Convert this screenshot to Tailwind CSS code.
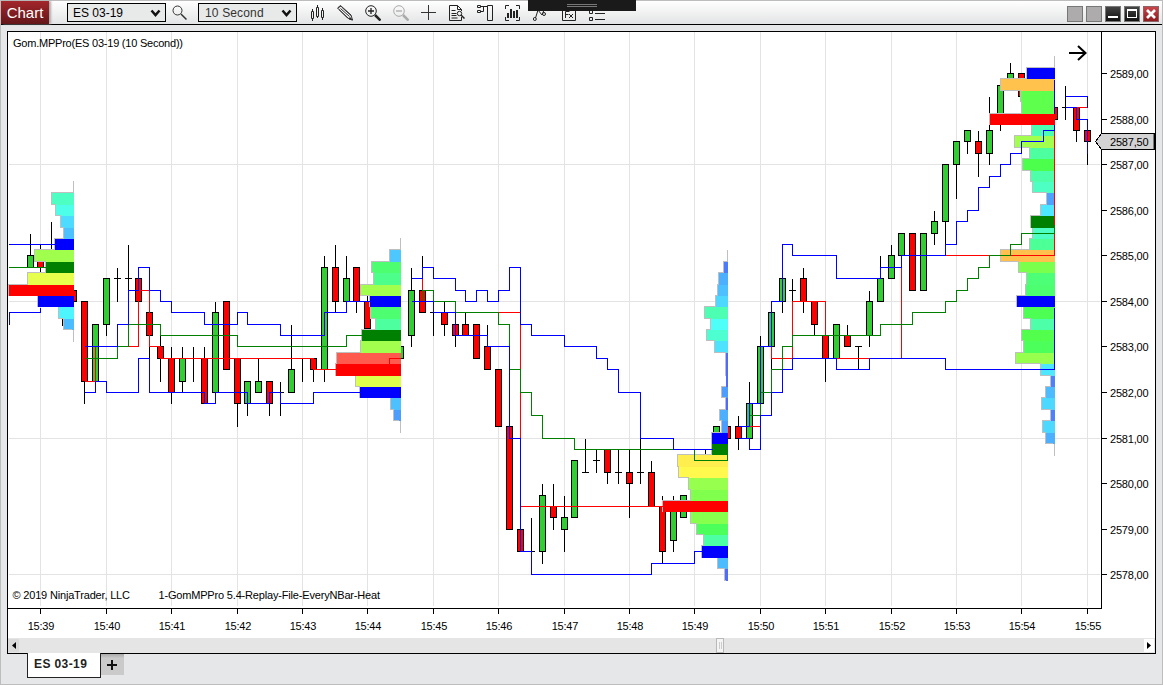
<!DOCTYPE html>
<html lang="en">
<head>
  <meta charset="UTF-8" />
  <meta name="viewport" content="width=device-width, initial-scale=1.0"/>
  <title>Chart - ES 03-19</title>
  <script src="https://cdn.jsdelivr.net/npm/@tailwindcss/browser@4"></script>
</head>
<body class="font-['Liberation_Sans',sans-serif] text-black overflow-hidden">
  <div class="relative w-[1163px] h-[685px] border border-[#bdbdbd] bg-[#e6e7e8] flex flex-col">

    <!-- Toolbar -->
    <header class="h-6 shrink-0 border-b border-black bg-linear-to-b from-white to-[#e3e4e5] flex items-center">
      <div class="w-12 h-full bg-linear-to-b from-[#a3262b] to-[#64161a] text-white text-[15px] leading-[23px] text-center shadow-[2px_0_2px_#aaa]">Chart</div>
      <div class="ml-[18px] w-[99px] h-[19px] border border-black bg-[#e8e9e9] flex items-center justify-between pl-[5px] pr-1 text-[12px]">
        <span>ES 03-19</span>
        <svg width="11" height="8" viewBox="0 0 11 8" fill="none" stroke="#111" stroke-width="2.500"><path d="M1.500 1.500 5.500 6l4-4.500"/></svg>
      </div>
      <svg class="ml-[6px]" width="16" height="16" viewBox="0 0 16 16" fill="none" stroke="#333"><circle cx="5.500" cy="5.500" r="4.500"/><path d="m9 9 5.500 5.500" stroke-width="1.500"/></svg>
      <div class="ml-[10px] w-[99px] h-[19px] border border-black bg-[#e8e9e9] flex items-center justify-between pl-[6px] pr-1 text-[12px] text-[#333]">
        <span class="tracking-[0.15px]">10 Second</span>
        <svg width="11" height="8" viewBox="0 0 11 8" fill="none" stroke="#111" stroke-width="2.500"><path d="M1.500 1.500 5.500 6l4-4.500"/></svg>
      </div>
      <div class="ml-3 mt-px flex gap-3">
        <svg width="16" height="16" viewBox="0 0 16 16" fill="none" stroke="#222"><path d="M3.500 4v2M3.500 13v3M2.500 6.500h2v7h-2zM8.500 0v3M8.500 11v2M7.500 2.500h2v9h-2zM13.500 3v3M13.500 12v3M12.500 5.500h2v7h-2z"/></svg>
        <svg width="16" height="16" viewBox="0 0 16 16" fill="none" stroke="#333"><path d="m.500 3 3-2.500L14 10l1.500 5-5-2zM2 4.500 11 13M4.500 2 14 10.500M3.500 3.500l9 8M1 3l3-2" /><path d="m13 12.500 2.500 2.500-3.500-1z" fill="#222"/></svg>
        <svg width="16" height="16" viewBox="0 0 16 16" fill="none" stroke="#222"><circle cx="6" cy="6" r="5.300"/><path d="M3 6h6M6 3v6" stroke-width="1.300"/><path d="m10 10 5.500 5.500" stroke-width="2.500"/></svg>
        <svg width="16" height="16" viewBox="0 0 16 16" fill="none" stroke="#aaa"><circle cx="6" cy="6" r="5.300"/><path d="M3 6h6" stroke-width="1.300"/><path d="m10 10 5.500 5.500" stroke-width="2.500"/></svg>
        <svg width="16" height="16" viewBox="0 0 16 16" stroke="#333"><path d="M0 7.500h15M7.500 0v15"/></svg>
        <svg width="16" height="16" viewBox="0 0 16 16" fill="none" stroke="#222"><path d="M12.500 12v3.500h-12V.500h8l4 4V6M8.500.500v4h4M2.500 5.500h4M2.500 8.500h5M2.500 10.500h5M2.500 13h6"/><circle cx="10.500" cy="8.500" r="2.200"/><path d="m12 10 3.500 3.500" stroke-width="1.500"/></svg>
        <svg width="16" height="16" viewBox="0 0 16 16" fill="none" stroke="#222"><path d="M.500.500h3v2h-3zM.500 5.500h3v2h-3zM10.500.500h5v15h-5zM3.500 1.500h7M3.500 6.500h3v-5"/></svg>
        <svg width="16" height="16" viewBox="0 0 16 16" fill="none" stroke="#222"><path d="M.500 4V.500H4M11 .500h3.500V4M.500 12v3.500H4M11 15.500h3.500V12"/><path d="M3 8v5M6 4v9M9 6v7M12 5v8" stroke-width="2"/></svg>
        <svg width="16" height="16" viewBox="0 0 16 16" fill="none" stroke="#222"><path d="m2.500 13 2.500-8 4 5 2-5"/><circle cx="1.800" cy="14" r="1.500"/><circle cx="11" cy="9" r="1.500"/></svg>
        <svg width="16" height="16" viewBox="0 0 16 16" fill="none" stroke="#222"><path d="M1.500 2.500h13v13h-13zM4.500 13V6.500h4M4.500 9.500h3M8 9l4 4M12 9l-4 4"/></svg>
        <svg width="16" height="16" viewBox="0 0 16 16" fill="none" stroke="#222"><path d="M.500 5.500h3v3h-3zM.500 12.500h3v3h-3zM6 8.500h10M6 14.500h10"/></svg>
      </div>

      <!-- Window buttons -->
      <div class="ml-auto mr-[3px] mt-[2px] flex gap-[3px]">
        <div class="w-4 h-4 border border-[#777] bg-[#aeabac]"></div>
        <div class="w-4 h-4 border border-[#777] bg-[#aeabac]"></div>
        <div class="w-4 h-4 border border-[#777] bg-linear-to-b from-[#444] to-[#111] flex items-end justify-center pb-[3px]"><div class="w-[10px] h-[2px] bg-white"></div></div>
        <div class="w-4 h-4 border border-[#777] bg-linear-to-b from-[#444] to-[#111] flex items-center justify-center"><div class="w-[10px] h-[9px] border border-t-2 border-white"></div></div>
        <div class="w-4 h-4 border border-[#8c6264] bg-linear-to-b from-[#c8454a] to-[#8c1c20] flex items-center justify-center">
          <svg width="10" height="10" viewBox="0 0 10 10" stroke="#fff" stroke-width="2.700"><path d="m1 1 8 8M9 1 1 9"/></svg>
        </div>
      </div>
    </header>

    <!-- Docked handle over the toolbar -->
    <div class="absolute -top-px left-[527px] w-[108px] h-[11px] bg-[#1a1a1a] flex flex-col items-center gap-px pt-1">
      <div class="w-[30px] h-px bg-[#777]"></div>
      <div class="w-[30px] h-px bg-[#777]"></div>
    </div>

    <!-- Chart panel -->
    <main class="mt-[6px] ml-[6px] w-[1149px] h-[623px] shrink-0 border border-black bg-white flex flex-col">
      <svg id="chart" width="1147" height="606" viewBox="8 32 1147 606" class="block shrink-0 text-[11px]" shape-rendering="crispEdges"></svg>
      <div class="h-[15px] bg-[#e5e5e5] flex items-center justify-between">
        <div class="w-[11px] h-[13px] bg-[#dadada] flex items-center justify-center"><svg width="4" height="7" viewBox="0 0 4 7"><path d="M4 0v7L0 3.500z"/></svg></div>
        <div class="ml-[697px] w-2 h-[15px] border border-[#b8b8b8] bg-[#f4f4f4] flex justify-center gap-px py-[3px]"><div class="w-px bg-[#ccc]"></div><div class="w-px bg-[#ccc]"></div></div>
        <div class="ml-auto mr-px w-[10px] h-[13px] bg-white flex items-center justify-center"><svg width="4" height="7" viewBox="0 0 4 7"><path d="M0 0v7l4-3.500z"/></svg></div>
      </div>
    </main>

    <!-- Tabs -->
    <div class="relative -mt-px ml-[26px] flex items-start">
      <div class="w-[74px] h-[25px] bg-white border border-t-0 border-[#222] text-[12px] tracking-[0.4px] font-bold text-[#222] leading-[23px] pl-[6px]">ES 03-19</div>
      <div class="mt-px w-[23px] h-[21px] bg-linear-to-b from-[#aaa] via-[#cacaca] via-20% to-[#cacaca] flex items-center justify-center pr-[2px]">
        <svg width="10" height="10" viewBox="0 0 10 10" stroke="#111" stroke-width="2"><path d="M0 5h10M5 0v10"/></svg>
      </div>
    </div>
  </div>

  <script>
    const GREEN = '#32cd32', RED = '#ff0000';
    // price step n (quarter points away from 2584) to pixel row
    const row = n => Math.round(300.9 - 11.39 * n);
    let out = '';

    const line = (d, color) => { out += `<path d="${d}" fill="none" stroke="${color}" transform="translate(.5 .5)"/>`; };
    const rect = (x, y, w, h, color) => { out += `<rect x="${x}" y="${y}" width="${w}" height="${h}" fill="${color}"/>`; };

    // Grid
    const times = [40,106,171,237,302,367,433,498,564,629,694,760,825,891,956,1021,1087];
    times.forEach(x => rect(x, 32, 1, 574, '#e3e3e3'));
    [164,301,438,574].forEach(y => rect(9, y, 1091, 1, '#e3e3e3'));

    // Candles: x, high, body top, body bottom, low, kind (1 up, -1 down, 0 doji, 2 wick only)
    const candles = [
      [30,234,255,267,267,1],[40,245,261,267,272,-1],[51,222,250,250,250,2],[62,319,325,325,325,2],[73,290,290,301,301,-1],
      [84,301,301,381,403,-1],[95,324,324,381,381,1],[106,278,278,324,335,1],[117,268,278,278,301,0],[128,245,278,278,290,0],
      [138,278,278,301,301,-1],[149,312,312,335,358,-1],[160,335,346,358,381,-1],[171,347,358,392,403,-1],[182,347,358,381,392,1],
      [193,347,358,358,381,2],[204,347,358,403,403,-1],[215,302,312,392,392,1],[226,301,301,369,369,-1],[237,358,358,403,426,-1],
      [247,381,381,403,415,1],[258,358,381,392,392,1],[269,381,381,403,415,-1],[280,382,392,392,415,0],[291,325,369,392,392,1],
      [302,359,359,359,381,2],[313,358,358,369,381,-1],[324,256,267,369,381,1],[335,245,267,301,312,-1],[346,256,278,301,301,1],
      [356,267,267,301,312,-1],[367,296,301,328,328,-1],[400,346,346,358,358,1],
      [411,268,290,335,346,1],[422,256,290,312,312,-1],[433,312,312,312,335,0],[444,302,312,324,335,-1],[455,324,324,335,346,-1],
      [465,313,324,335,335,-1],[476,324,324,358,358,-1],[487,325,346,369,369,-1],[498,369,369,426,426,-1],[509,426,426,529,529,-1],
      [520,529,529,551,551,-1],[531,518,551,551,551,0],[542,484,495,551,563,1],[553,484,506,517,529,-1],[564,496,517,529,551,1],
      [574,460,460,517,517,1],[585,439,472,472,472,0],[596,450,460,460,472,0],[607,449,449,472,483,-1],[618,450,472,472,483,0],
      [629,450,472,483,517,-1],[640,439,472,472,483,0],[651,461,472,506,506,-1],[662,496,506,551,562,-1],[673,496,506,540,551,1],
      [683,495,495,517,517,1],[705,449,455,455,455,2],[716,426,426,438,438,1],[727,426,426,438,438,-1],
      [738,416,426,438,449,-1],[749,382,403,438,438,1],[760,336,346,403,403,1],[771,312,312,346,369,1],[782,278,278,301,312,1],
      [792,279,290,290,301,0],[803,268,278,301,312,-1],[814,301,301,324,335,-1],[825,335,335,358,381,-1],[836,324,324,358,358,1],
      [847,325,335,346,346,-1],[858,346,346,346,369,0],[869,291,301,335,346,1],[880,256,278,301,301,1],[891,245,255,278,278,1],
      [901,233,233,255,255,1],[912,233,233,290,290,-1],[923,233,233,290,290,1],[934,211,221,233,244,1],[945,164,164,221,244,1],
      [956,141,141,164,198,1],[967,130,130,141,153,1],[978,131,141,153,176,-1],[989,97,130,153,164,1],[1000,85,85,119,130,1],
      [1010,63,73,85,85,1],[1021,73,73,96,96,-1],[1054,107,107,119,119,-1],[1065,86,107,107,119,0],[1076,107,107,130,141,-1],
      [1087,130,130,141,164,-1]
    ];
    candles.forEach(([x, hi, top, bot, lo, kind]) => {
      rect(x, hi, 1, lo - hi + 1, '#000');
      if (kind === 0) rect(x - 3, top, 7, 1, '#000');
      if (kind === 1 || kind === -1) {
        rect(x - 3, top, 7, bot - top + 1, '#000');
        rect(x - 2, top + 1, 5, bot - top - 1, kind === 1 ? GREEN : RED);
      }
    });

    // Volume profiles: axis x, line top/bottom, first price step, rows of [left, color, marker]
    const B = '#0000ff', G = '#008000', R = '#ff0000';
    const profiles = [
      { x: 73, from: 181, to: 341, n: 9, rows: [[51,'#4dffc3'],[55,'#4dffe8'],[60,'#4ddcff'],[63,'#4dc1ff'],[54,B,1],[34,'#a0ff4d'],[45,G,1],[27,'#e6ff4d'],[8,R,1],[37,B,1],[58,'#4df5ff'],[63,'#4dbcff']] },
      { x: 400, from: 238, to: 432, n: 4, rows: [[389,'#4dc8ff'],[371,'#4dff70'],[373,'#4dff8a'],[360,'#a2ff4d'],[369,B,1],[370,'#4dff70'],[375,'#4dff9e'],[361,G,1],[360,'#a2ff4d'],[336,'#ff5a4d'],[335,R,1],[355,'#dfff4d'],[359,B,1],[390,'#4dc1ff'],[393,'#4d9dff']] },
      { x: 727, from: 250, to: 580, n: 3, rows: [[723,'#4d7bff'],[718,'#4db0ff'],[717,'#4dc1ff'],[715,'#4dd8ff'],[704,'#4dffb3'],[710,'#4dfff8'],[706,'#4dffd0'],[714,'#4de3ff'],[725,'#4d6bff'],[725,'#4d6bff'],[726,'#4d6bff'],[721,'#4d9dff'],[725,'#4d6bff'],[719,'#4db0ff'],[721,'#4d9dff'],[711,B,1],[711,G,1],[677,'#ffee4d'],[678,'#fff84d'],[688,'#97ff4d'],[690,'#80ff4d'],[662,R,1],[690,'#87ff4d'],[696,'#4dff5a'],[703,'#4dffa5'],[701,B,1],[717,'#4dbcff'],[724,'#4d6bff']] },
      { x: 1054, from: 56, to: 455, n: 20, rows: [[1026,B,1],[1000,'#ffc34d'],[1020,'#5eff4d'],[1021,'#5eff4d'],[989,R,1],[1031,'#4dffb0'],[1014,'#a2ff4d'],[1029,'#4dff9e'],[1022,'#4dff4d'],[1030,'#4dffa8'],[1032,'#4dffc3'],[1046,'#4da2ff'],[1040,'#4de8ff'],[1030,G,1],[1032,'#4dffc3'],[1029,'#4dff97'],[1000,'#ffc04d'],[1018,'#7bff4d'],[1026,'#4dff77'],[1025,'#4dff70'],[1016,B,1],[1023,'#4dff53'],[1030,'#4dffa8'],[1021,'#53ff4d'],[1023,'#4dff5a'],[1015,'#97ff4d'],[1040,'#4de8ff'],[1050,'#4d80ff'],[1045,'#4dbcff'],[1041,'#4dd8ff'],[1050,'#4d80ff'],[1042,'#4dd8ff'],[1045,'#4db0ff']] }
    ];
    profiles.forEach(p => {
      rect(p.x, p.from, 1, p.to - p.from + 1, '#bfbfbf');
      let d = `M${p.x} ${row(p.n) - 6}`;
      p.rows.forEach(([left, color], i) => {
        const top = row(p.n - i) - 5, next = row(p.n - i - 1) - 5;
        rect(left, top, p.x + 1 - left, next - top, color);
        d += `H${left}V${next - 1}`;
      });
      line(d + `H${p.x}`, '#bfbfbf');
      p.rows.forEach(([left, color, marker], i) => {
        const top = row(p.n - i) - 5, next = row(p.n - i - 1) - 5;
        if (marker) rect(left + 1, top, p.x - left, next - top, color);
        else rect(p.x - 1, top, 2, next - top, color);
      });
    });

    // Value area, point of control and mean lines
    line('M8 290H9M84 381H95V346H138V290H149V346H160V358H313V369H336M389 369V358H400', RED);
    line('M422 278V290M498 312H520V506H662M749 426H760M771 346V358H792V301H825V358H901V255H1054V125M1076 107H1087V96', RED);
    line('M8 267H46M84 358H117V346H128V324H160V335H237V346H346V335H362', G);
    line('M422 301V290H433V301H455V312H498V324H509V369H520V392H531V415H542V438H574V449H694V460H727V449', G);
    line('M749 415H760V392H771V369H782V346H792V335H880V324H912V312H945V301H956V290H967V278H978V267H989V255H1010V244H1021V233H1054V224', G);
    line('M8 244H55M8 324H9V312H40V307', B);
    line('M84 346H117V324H128V290H138V267H149V290H160V301H171V312H204V324H237V312H247V324H280V335H324V312H346V301H370', B);
    line('M84 392H95V381H106V392H138V358H149V392H204V403H215V392H247V403H269V392H280V403H313V392H360', B);
    line('M411 278H422V267H433V278H455V290H465V301H476V290H487V301H498V290H509V267H520V324H531V335H564V346H596V358H607V369H618V392H640V438H673V449H712', B);
    line('M411 301H433V312H455V335H487V346H509V438H520V551H531V574H651V563H694V551H702', B);
    line('M738 426H749V403H760V346H771V301H782V244H792V255H836V278H880V267H901V255H945V244H956V221H967V210H978V187H989V176H1000V164H1010V153H1021V141H1043V130H1054V79', B);
    line('M738 438H749V449H760V415H771V392H782V369H792V358H836V369H869V358H945V369H1054V307', B);
    line('M1065 96H1087V107M1065 107H1076V119H1087V153', B);
    rect(990, 114, 65, 11, R);

    // Axes
    rect(1101, 32, 1, 577, '#000');
    rect(8, 608, 1094, 1, '#000');
    times.forEach((x, i) => {
      rect(x, 609, 1, 5, '#000');
      out += `<text x="${x + 1}" y="630" text-anchor="middle" textLength="26.500">15:${39 + i}</text>`;
    });
    for (let price = 2578; price <= 2589; price++) {
      const y = row((price - 2584) * 4);
      rect(1102, y, 5, 1, '#000');
      out += `<text x="1110" y="${y + 5}" textLength="38.500">${price},00</text>`;
    }

    // Last price marker
    out += '<path d="M1095.500 141.500 1101.500 133.500H1154.500V149.500H1101.500Z" fill="#d3d3d3" stroke="#000"/>';
    rect(1153, 134, 1, 15, '#777');
    out += '<text x="1110" y="146" textLength="38.500">2587,50</text>';

    // Captions and scroll arrow
    out += '<text x="13" y="47" textLength="170">Gom.MPPro(ES 03-19 (10 Second))</text>';
    out += '<text x="12.500" y="599" textLength="117.500">© 2019 NinjaTrader, LLC</text>';
    out += '<text x="158.500" y="599" textLength="221.500">1-GomMPPro 5.4-Replay-File-EveryNBar-Heat</text>';
    out += '<path d="M1069 53H1085M1078 46l7.500 7-7.500 7" fill="none" stroke="#000" stroke-width="2" shape-rendering="auto"/>';

    document.getElementById('chart').innerHTML = out;
  </script>
</body>
</html>
